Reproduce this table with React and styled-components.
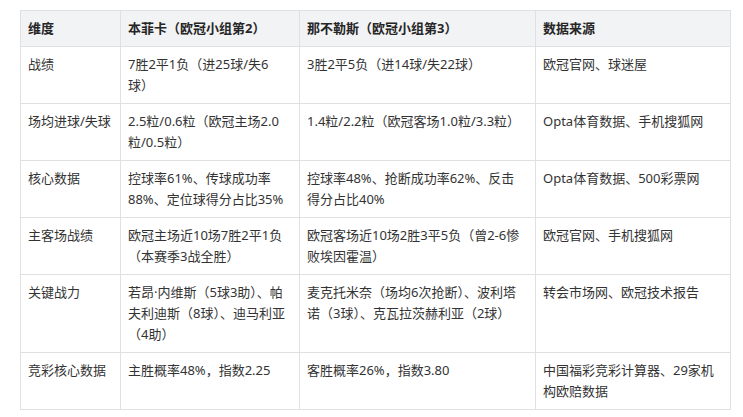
import styled, { createGlobalStyle } from "styled-components";

const GlobalStyle = createGlobalStyle`
  body {
    margin: 0;
    background: #ffffff;
    font-family: "Noto Sans", "Noto Sans CJK SC", sans-serif;
  }
`;

const Page = styled.div`
  padding: 10px 13px 10px 20px;
`;

const Table = styled.table`
  border-collapse: collapse;
  table-layout: fixed;
  width: 710px;
  font-size: 13px;
  line-height: 21px;
  color: #333333;
`;

const HeadCell = styled.th`
  background: #f2f3f5;
  border: 1px solid #e0e0e0;
  padding: 7px 12px 7px 7px;
  text-align: left;
  font-weight: 700;
  color: #262626;
`;

const Cell = styled.td`
  border: 1px solid #e0e0e0;
  padding: 7px 12px 7px 7px;
  vertical-align: top;
  text-align: left;

  &:first-child {
    padding-right: 3px;
  }
`;

const columns = [
  { title: "维度", width: 100 },
  { title: "本菲卡（欧冠小组第2）", width: 179 },
  { title: "那不勒斯（欧冠小组第3）", width: 236 },
  { title: "数据来源", width: 195 },
];

const rows = [
  ["战绩", "7胜2平1负（进25球/失6球）", "3胜2平5负（进14球/失22球）", "欧冠官网、球迷屋"],
  ["场均进球/失球", "2.5粒/0.6粒（欧冠主场2.0粒/0.5粒）", "1.4粒/2.2粒（欧冠客场1.0粒/3.3粒）", "Opta体育数据、手机搜狐网"],
  ["核心数据", "控球率61%、传球成功率88%、定位球得分占比35%", "控球率48%、抢断成功率62%、反击得分占比40%", "Opta体育数据、500彩票网"],
  ["主客场战绩", "欧冠主场近10场7胜2平1负（本赛季3战全胜）", "欧冠客场近10场2胜3平5负（曾2-6惨败埃因霍温）", "欧冠官网、手机搜狐网"],
  ["关键战力", "若昂·内维斯（5球3助）、帕夫利迪斯（8球）、迪马利亚（4助）", "麦克托米奈（场均6次抢断）、波利塔诺（3球）、克瓦拉茨赫利亚（2球）", "转会市场网、欧冠技术报告"],
  ["竞彩核心数据", "主胜概率48%，指数2.25", "客胜概率26%，指数3.80", "中国福彩竞彩计算器、29家机构欧赔数据"],
];

export default function App() {
  return (
    <>
      <GlobalStyle />
      <Page>
        <Table>
          <colgroup>
            {columns.map((c) => (
              <col key={c.title} style={{ width: c.width }} />
            ))}
          </colgroup>
          <thead>
            <tr>
              {columns.map((c) => (
                <HeadCell key={c.title}>{c.title}</HeadCell>
              ))}
            </tr>
          </thead>
          <tbody>
            {rows.map((row) => (
              <tr key={row[0]}>
                {row.map((text, i) => (
                  <Cell key={i}>{text}</Cell>
                ))}
              </tr>
            ))}
          </tbody>
        </Table>
      </Page>
    </>
  );
}
